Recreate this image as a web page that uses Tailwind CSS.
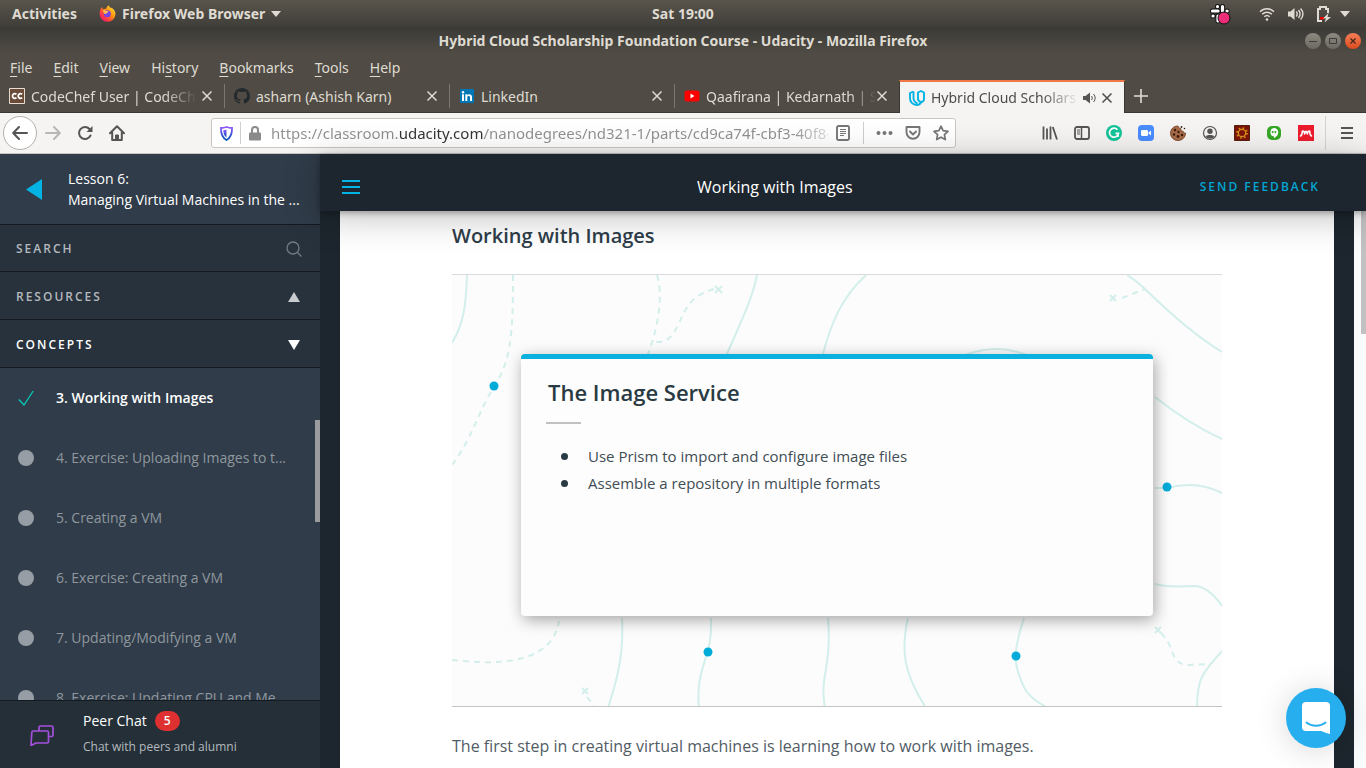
<!DOCTYPE html>
<html lang="en">
<head>
<meta charset="utf-8">
<title>Hybrid Cloud Scholarship Foundation Course - Udacity</title>
<script src="https://cdn.jsdelivr.net/npm/@tailwindcss/browser@4"></script>
</head>
<body class="flex h-screen flex-col overflow-hidden bg-[#1d262e] font-['Open_Sans','Noto_Sans',sans-serif]">

<!-- System bar -->
<div class="grid h-[27px] shrink-0 grid-cols-[1fr_auto_1fr] items-center bg-linear-to-b from-[#59554c] to-[#403e39] text-[14px] font-bold text-[#dfdbd2] font-['Noto_Sans',sans-serif]">
  <div class="flex items-center gap-[22px] pl-3">
    <button class="leading-5">Activities</button>
    <button class="flex items-center gap-[6px] leading-5">
      <svg class="size-[17px]" viewBox="0 0 16 16"><defs><linearGradient id="fx" x1="1" y1="0" x2="0" y2="1"><stop offset="0" stop-color="#fff44f"/><stop offset=".4" stop-color="#ff980e"/><stop offset=".7" stop-color="#ff3647"/><stop offset="1" stop-color="#e31587"/></linearGradient></defs><path fill="url(#fx)" d="M1 5.200C1.400 3.500 2.200 2.200 3 2c0 .8.2 1.400.7 1.900.8-.4 1.800-.6 3.100-.4C7 2 8.300.7 9.600.2c-.2 1 .3 1.700 1.200 2.500 1.100-.1 1.700.3 1.700.3 2 1.600 3 3.400 3 5.500A7.400 7.400 0 0 1 8 15.800 7.400 7.400 0 0 1 .6 8.500C.6 7 .8 6 1 5.200z"/><circle cx="7.800" cy="8.300" r="3.300" fill="#7542e5"/><path fill="#ffbd4f" d="M3.600 5.400c1.500-.8 2.700-.3 3.600.3 1.200 0 2.200.5 1.400 1.200-.6.500-1.500.500-1.700 1.500-.9.300-2-.2-2.400-1.200z"/></svg>
      Firefox Web Browser
      <svg class="h-[6px] w-[10px]" viewBox="0 0 10 6"><path fill="#dfdbd2" d="M0 0h10L5 6z"/></svg>
    </button>
  </div>
  <time>Sat 19:00</time>
  <div class="flex items-center justify-end pr-4">
    <svg class="mr-7 size-[22px]" viewBox="0 0 22 22"><g stroke="#111" stroke-width="5" stroke-linecap="round"><path d="M8.500 3.500v.1M3.500 8H9M13.500 3.500V8M18 8h.1M4 13h.1M9 13v5"/></g><g stroke="#fff" stroke-width="3.200" stroke-linecap="round"><path d="M8.500 3.500v.1M3.500 8H9M13.500 3.500V8M18 8h.1M4 13h.1M9 13v5"/></g><circle cx="15" cy="15" r="6" fill="#ec2d77" stroke="#111"/></svg>
    <svg class="mr-3 size-4" viewBox="0 0 16 16" fill="none" stroke="#dfdbd2" stroke-width="1.500"><path d="M1 5.800c4-4 10-4 14 0M3.200 8.300c2.800-2.800 6.800-2.800 9.600 0M5.300 10.800c1.600-1.500 3.800-1.500 5.400 0"/><circle cx="8" cy="13.500" r="1.300" fill="#dfdbd2" stroke="none"/></svg>
    <svg class="mr-3 h-4 w-[17px]" viewBox="0 0 17 16" fill="none" stroke="#dfdbd2" stroke-width="1.400"><path fill="#dfdbd2" stroke="none" d="M1 5.500h2.500L7.500 2v12l-4-3.500H1z"/><path d="M9.300 5.500c1.200 1.600 1.200 3.400 0 5M11.500 4c2 2.600 2 5.400 0 8M13.600 2.500c3 3.500 3 7.500 0 11"/></svg>
    <svg class="mr-2 h-[18px] w-4" viewBox="0 0 16 18"><path fill="none" stroke="#dfdbd2" stroke-width="2" d="M6 16H2V4h2V2h6v2h2v4"/><path fill="#e00" d="M4 12h4v2.500H4z"/><path fill="#dfdbd2" d="M12.500 8 7 13.500h3L8.500 17.500l6.500-5.500h-3.500z"/></svg>
    <svg class="h-[6px] w-[10px]" viewBox="0 0 10 6"><path fill="#dfdbd2" d="M0 0h10L5 6z"/></svg>
  </div>
</div>

<!-- Title bar -->
<div class="grid h-[27px] shrink-0 grid-cols-[1fr_auto_1fr] items-center bg-linear-to-b from-[#3b3a36] to-[#504c45]">
  <span></span>
  <div class="text-[14px] font-bold text-[#dfdbd2] font-['Noto_Sans',sans-serif]">Hybrid Cloud Scholarship Foundation Course - Udacity - Mozilla Firefox</div>
  <div class="flex justify-end gap-1 pr-[5px]">
    <button aria-label="Minimize" class="flex size-4 items-center justify-center rounded-full bg-linear-to-b from-[#8d8a82] to-[#6c6962]"><svg class="size-4" viewBox="0 0 16 16" stroke="#3c3b37" fill="none"><path d="M4 8.500h8"/></svg></button>
    <button aria-label="Maximize" class="flex size-4 items-center justify-center rounded-full bg-linear-to-b from-[#8d8a82] to-[#6c6962]"><svg class="size-4" viewBox="0 0 16 16" stroke="#3c3b37" fill="none"><path d="M4.500 5.500h7v5h-7z"/></svg></button>
    <button aria-label="Close" class="flex size-4 items-center justify-center rounded-full bg-linear-to-b from-[#f37e55] to-[#dd4a1b]"><svg class="size-4" viewBox="0 0 16 16" stroke="#46281c" stroke-width="1.300" fill="none"><path d="m5.500 5.500 5 5m0-5-5 5"/></svg></button>
  </div>
</div>

<!-- Menu bar -->
<nav class="flex h-[26px] shrink-0 items-center gap-[21px] bg-[#504c45] pl-[10px] text-[14px] text-[#dfdbd2] font-['Noto_Sans',sans-serif]">
  <button><u class="underline-offset-3">F</u>ile</button>
  <button><u class="underline-offset-3">E</u>dit</button>
  <button><u class="underline-offset-3">V</u>iew</button>
  <button>Hi<u class="underline-offset-3">s</u>tory</button>
  <button><u class="underline-offset-3">B</u>ookmarks</button>
  <button><u class="underline-offset-3">T</u>ools</button>
  <button><u class="underline-offset-3">H</u>elp</button>
</nav>

<!-- Tabs -->
<div class="flex h-[33px] shrink-0 items-stretch border-b border-[#3a3833] bg-[#504c45] text-[14px] text-[#dfdbd2] font-['Noto_Sans',sans-serif]">
  <div class="flex w-[224px] items-center pr-[11px] pl-[9px]">
    <svg class="mr-[6px] size-4 shrink-0" viewBox="0 0 16 16"><path fill="#6a4a39" stroke="#e8ddd0" d="M.5.500h15v15H.500z"/><g fill="none" stroke="#fff" stroke-width="1.800"><path d="M7.500 6.200C5.500 5 3.500 5.800 3.500 8s2 3 4 1.800M13.200 6.200C11.200 5 9.200 5.800 9.200 8s2 3 4 1.800"/></g></svg>
    <span class="min-w-0 flex-1 overflow-hidden whitespace-nowrap mask-r-from-80%">CodeChef User | CodeCh</span>
    <button aria-label="Close tab" class="ml-1"><svg class="size-3" viewBox="0 0 12 12" stroke="#dfdbd2" stroke-width="1.500"><path d="m1.500 1.500 9 9m0-9-9 9"/></svg></button>
  </div>
  <div class="my-1 w-px bg-[#7b7870]"></div>
  <div class="flex w-[224px] items-center pr-[11px] pl-[9px]">
    <svg class="mr-[6px] size-4 shrink-0" viewBox="0 0 16 16"><path fill="#24292e" d="M8 0C3.580 0 0 3.580 0 8c0 3.540 2.290 6.530 5.470 7.590.4.070.550-.170.550-.380 0-.190-.010-.820-.010-1.490-2.010.370-2.530-.490-2.690-.940-.090-.230-.480-.940-.820-1.130-.280-.150-.680-.520-.010-.530.630-.010 1.080.580 1.230.820.720 1.210 1.870.870 2.330.660.070-.520.280-.870.510-1.070-1.780-.200-3.640-.890-3.640-3.950 0-.870.310-1.590.820-2.150-.080-.200-.360-1.020.080-2.120 0 0 .670-.210 2.200.820.640-.180 1.320-.270 2-.270s1.360.090 2 .270c1.530-1.040 2.200-.820 2.200-.820.440 1.100.160 1.920.080 2.120.510.560.820 1.270.820 2.150 0 3.070-1.870 3.750-3.650 3.950.290.250.540.730.540 1.480 0 1.070-.010 1.930-.010 2.200 0 .210.150.460.550.380A8.010 8.010 0 0 0 16 8c0-4.420-3.580-8-8-8z"/></svg>
    <span class="min-w-0 flex-1 overflow-hidden whitespace-nowrap">asharn (Ashish Karn)</span>
    <button aria-label="Close tab" class="ml-1"><svg class="size-3" viewBox="0 0 12 12" stroke="#dfdbd2" stroke-width="1.500"><path d="m1.500 1.500 9 9m0-9-9 9"/></svg></button>
  </div>
  <div class="my-1 w-px bg-[#7b7870]"></div>
  <div class="flex w-[224px] items-center pr-[11px] pl-[9px]">
    <svg class="mr-[6px] size-4 shrink-0" viewBox="0 0 16 16"><path fill="#0077b5" d="M1 1h14v14H1z"/><path fill="#fff" d="M3 6.300h2V13H3zM6.300 6.300h1.900v.9c1-1.600 4.800-1.600 4.800 1.700V13h-2V9.500c0-2-2.700-1.900-2.700 0V13h-2z"/><circle cx="4" cy="4.200" r="1.200" fill="#fff"/></svg>
    <span class="min-w-0 flex-1 overflow-hidden whitespace-nowrap">LinkedIn</span>
    <button aria-label="Close tab" class="ml-1"><svg class="size-3" viewBox="0 0 12 12" stroke="#dfdbd2" stroke-width="1.500"><path d="m1.500 1.500 9 9m0-9-9 9"/></svg></button>
  </div>
  <div class="my-1 w-px bg-[#7b7870]"></div>
  <div class="flex w-[224px] items-center pr-[11px] pl-[9px]">
    <svg class="mr-[6px] size-4 shrink-0" viewBox="0 0 16 16"><rect y="2.500" x=".5" width="15" height="11" rx="2.500" fill="#f00"/><path fill="#fff" d="m6.500 5.500 4 2.500-4 2.500z"/></svg>
    <span class="min-w-0 flex-1 overflow-hidden whitespace-nowrap mask-r-from-85%">Qaafirana | Kedarnath | S</span>
    <button aria-label="Close tab"><svg class="size-3" viewBox="0 0 12 12" stroke="#dfdbd2" stroke-width="1.500"><path d="m1.500 1.500 9 9m0-9-9 9"/></svg></button>
  </div>
  <div class="-mb-px flex w-[226px] items-center border-x border-t-2 border-x-[#3a3833] border-t-[#f07746] bg-[#f5f4f2] pr-[11px] pl-[9px] text-[#4c4c4c]">
    <svg class="mr-[6px] size-4 shrink-0" viewBox="0 0 16 16" fill="none" stroke="#02b3e4" stroke-width="1.900" stroke-linejoin="round"><path d="M4.500 1.500 1 3v5c0 4 2.500 6.500 6.500 7 2.500 0 4-1 4.500-3"/><path d="M4.500 1.500V8c0 2.500 1.500 4.500 4 5.500M9 2.500l3-1.500 3 1.500v6.500c0 2-1.500 3.200-3.200 3C10 11.500 9 10.500 9 8.500z"/></svg>
    <span class="min-w-0 flex-1 overflow-hidden whitespace-nowrap mask-r-from-75%">Hybrid Cloud Scholars</span>
    <button aria-label="Mute tab" class="ml-1"><svg class="h-3 w-[14px]" viewBox="0 0 14 12"><path fill="#555" d="M0 4h2.500L7 .500v11L2.500 8H0z"/><path fill="none" stroke="#555" d="M8.500 4c1 1.300 1 2.700 0 4M10.500 2c2.200 2.600 2.200 5.400 0 8"/></svg></button>
    <button aria-label="Close tab" class="ml-1"><svg class="size-3" viewBox="0 0 12 12" stroke="#4c4c4c" stroke-width="1.500"><path d="m1.500 1.500 9 9m0-9-9 9"/></svg></button>
  </div>
  <button aria-label="New tab" class="ml-[9px]"><svg class="size-[14px]" viewBox="0 0 14 14" stroke="#dfdbd2" stroke-width="1.600"><path d="M7 0v14M0 7h14"/></svg></button>
</div>

<!-- Navigation toolbar -->
<div class="flex h-[41px] shrink-0 items-center border-b border-[#c8c6c3] bg-[#f5f4f2] text-[#555]">
  <button aria-label="Back" class="ml-[3px] flex size-[34px] items-center justify-center rounded-full border border-[#b3b1ae] bg-white"><svg class="size-4" viewBox="0 0 16 16" fill="none" stroke="currentColor" stroke-width="2" stroke-linecap="round" stroke-linejoin="round"><path d="M15 8H1.500M7 2 1.200 8 7 14"/></svg></button>
  <button aria-label="Forward" class="flex size-8 items-center justify-center text-[#b8b7b5]"><svg class="size-4" viewBox="0 0 16 16" fill="none" stroke="currentColor" stroke-width="2" stroke-linecap="round" stroke-linejoin="round"><path d="M1 8h13.500M9 2l5.800 6L9 14"/></svg></button>
  <button aria-label="Reload" class="flex size-8 items-center justify-center"><svg class="size-4" viewBox="0 0 16 16"><path fill="none" stroke="currentColor" stroke-width="2" stroke-linecap="round" d="M13.500 10.500A6 6 0 1 1 12.500 4"/><path fill="currentColor" d="M15.500 1v6h-6z"/></svg></button>
  <button aria-label="Home" class="flex size-8 items-center justify-center"><svg class="size-4" viewBox="0 0 16 16" fill="none" stroke="currentColor" stroke-width="2" stroke-linejoin="round" stroke-linecap="round"><path d="m1 8.200 7-7 7 7M3.200 7.500V15h9.600V7.500"/><path d="M6.500 14.500V10h3v4.500z" fill="currentColor" stroke-width="1"/></svg></button>
  <div class="mx-[78px] flex h-[30px] min-w-0 flex-1 items-center rounded-[3px] border border-[#c9c6c2] bg-white">
    <svg class="ml-2 h-[15px] w-[13px] shrink-0" viewBox="0 0 13 15"><defs><linearGradient id="sh" x1="0" y1="0" x2="0" y2="1"><stop offset="0" stop-color="#9059ff"/><stop offset="1" stop-color="#0250bb"/></linearGradient></defs><path fill="none" stroke="url(#sh)" stroke-width="1.800" d="M6.500 1C8 1.500 10.500 2 12 2c.2 5-.5 9-5.500 12C1.500 11 .8 7 1 2c1.500 0 4-.5 5.500-1z"/><path fill="url(#sh)" d="M6.500 3.500c-1 .4-2.200.6-3.200.7.1 3.300.8 5.300 3.200 7.300z"/></svg>
    <div class="mx-[7px] h-[22px] w-px bg-[#cfcdca]"></div>
    <svg class="h-[15px] w-[14px] shrink-0" viewBox="0 0 14 15"><rect x="1" y="6.500" width="12" height="8" rx="1" fill="#8a8a8a"/><path fill="none" stroke="#8a8a8a" stroke-width="2" d="M4 7.500V4a3 3 0 0 1 6 0v3.500"/></svg>
    <input aria-label="Address" value="https://classroom.udacity.com/nanodegrees/nd321-1/parts/cd9ca74f-cbf3-40f8-" class="ml-[9px] min-w-0 flex-1 bg-[linear-gradient(90deg,#8f8f8f_127px,#333_127px,#333_213px,#8f8f8f_213px,#8f8f8f_520px,#dddddd)] bg-clip-text text-[15px] text-transparent outline-none font-['Noto_Sans',sans-serif]">
    <button aria-label="Reader view" class="ml-2"><svg class="h-4 w-[14px]" viewBox="0 0 14 16" fill="none" stroke="#777"><rect x="1" y="1" width="12" height="14" rx="1.500" stroke-width="1.900"/><path d="M4 4.500h6M4 6.500h6M4 8.500h6M4 10.500h4"/></svg></button>
    <div class="ml-[13px] h-[22px] w-px bg-[#cfcdca]"></div>
    <button aria-label="Page actions" class="ml-3"><svg class="h-4 w-[17px]" viewBox="0 0 17 16" fill="#777"><circle cx="2.500" cy="8" r="2"/><circle cx="8.500" cy="8" r="2"/><circle cx="14.500" cy="8" r="2"/></svg></button>
    <button aria-label="Save to Pocket" class="ml-3"><svg class="size-4" viewBox="0 0 16 16" fill="none" stroke="#777" stroke-width="1.900" stroke-linecap="round" stroke-linejoin="round"><path d="M1.500 2h13v5c0 9-13 9-13 0z"/><path d="m5 6.500 3 3 3-3"/></svg></button>
    <button aria-label="Bookmark" class="mr-[6px] ml-3"><svg class="size-4" viewBox="0 0 16 16" fill="none" stroke="#777" stroke-width="1.700" stroke-linejoin="round"><path d="m8 1.200 2.100 4.500 4.900.6-3.600 3.400.9 4.900L8 12.200l-4.300 2.400.9-4.900L1 6.300l4.900-.6z"/></svg></button>
  </div>
  <button aria-label="Library" class="flex size-8 items-center justify-center"><svg class="size-4" viewBox="0 0 16 16" fill="none" stroke="currentColor" stroke-width="1.800"><path d="M1.500 1.500v13M5 3.500v11M8.500 1.500v13M10.800 2l4.200 12.500"/></svg></button>
  <button aria-label="Sidebars" class="flex size-8 items-center justify-center"><svg class="size-4" viewBox="0 0 16 16" fill="none" stroke="currentColor"><rect x="1" y="2" width="14" height="12" rx="2" stroke-width="1.800"/><path d="M7.500 2v12" stroke-width="1.500"/><path d="M3 5h3M3 7h3M3 9h3"/></svg></button>
  <button aria-label="Grammarly" class="flex size-8 items-center justify-center"><svg class="size-4" viewBox="0 0 16 16"><circle cx="8" cy="8" r="8" fill="#15c39a"/><path fill="none" stroke="#fff" stroke-width="1.700" d="M11.500 4.800a4.500 4.500 0 1 0 1 3.500H9.500M12 12V8.500"/></svg></button>
  <button aria-label="Zoom" class="flex size-8 items-center justify-center"><svg class="size-4" viewBox="0 0 16 16"><rect width="16" height="16" rx="4" fill="#4a8cff"/><rect x="3" y="5" width="7" height="6" rx="1.200" fill="#fff"/><path fill="#fff" d="m10.500 7.500 2.500-2v5l-2.500-2z"/></svg></button>
  <button aria-label="Cookies" class="flex size-8 items-center justify-center"><svg class="size-4" viewBox="0 0 16 16"><path fill="#a86b47" stroke="#6d3b22" stroke-width=".8" d="M8 1C4 .8.5 4 .5 8.200c0 4 3.300 7.300 7.500 7.300s7.600-3.200 7.500-7.500c-1.500.3-2.300-.6-2.300-1.800-1.800.2-2.600-.8-2.200-2.400C9.500 3.700 8.500 2.500 8 1z"/><g fill="#3b1d10"><circle cx="5" cy="5" r="1.300"/><circle cx="8.500" cy="7" r="1.200"/><circle cx="4" cy="9.500" r="1.200"/><circle cx="8" cy="11.500" r="1.400"/><circle cx="12" cy="10" r="1.200"/><circle cx="11.500" cy="2" r=".9"/><circle cx="14.500" cy="3.500" r=".8"/></g></svg></button>
  <button aria-label="Account" class="flex size-8 items-center justify-center"><svg class="size-4" viewBox="0 0 16 16"><circle cx="8" cy="8" r="6.500" fill="none" stroke="#555" stroke-width="1.200"/><circle cx="8" cy="6.300" r="2.700" fill="#555"/><path fill="#555" d="M3.500 11.500c1-2 8-2 9 0-2 3-7 3-9 0z"/></svg></button>
  <button aria-label="Extension settings" class="flex size-8 items-center justify-center"><svg class="size-4" viewBox="0 0 16 16"><path fill="#7e1408" stroke="#53200f" d="M.5.500h15v15H.500z"/><circle cx="8" cy="8" r="3.700" fill="none" stroke="#d8951c" stroke-width="1.300"/><circle cx="8" cy="8" r="5" fill="none" stroke="#d8951c" stroke-width="1.700" stroke-dasharray="1.600 2.327"/></svg></button>
  <button aria-label="Hangouts" class="flex size-8 items-center justify-center"><svg class="size-4" viewBox="0 0 16 16"><rect x="1" y="1" width="14" height="14" rx="5" fill="#35a826"/><path fill="#fff" d="M8 3a4.300 4.300 0 0 1 4.300 4.300c0 2.500-1.800 4.600-4.300 5.900v-1.700a4.300 4.300 0 0 1 0-8.500z"/><path fill="#35a826" d="M5.800 6h1.700v1.700l-.8 1v-1h-.9zM8.500 6h1.700v1.700l-.8 1v-1h-.9z"/></svg></button>
  <button aria-label="Mendeley" class="flex size-8 items-center justify-center"><svg class="size-4" viewBox="0 0 16 16"><path fill="#ec1c2d" d="M0 0h16v16H0z"/><path fill="none" stroke="#fff" stroke-width="1.600" stroke-linecap="round" stroke-linejoin="round" d="M2.500 11c1.300-.8 1.800-2 1.800-4.800M13.500 11c-1.300-.8-1.800-2-1.800-4.800M4.300 6.200c1.700-.3 2.400.8 2.300 2.800M11.700 6.200c-1.700-.3-2.400.8-2.300 2.800"/><circle cx="8" cy="7" r="1.600" fill="#fff"/></svg></button>
  <div class="ml-[3px] h-[34px] w-px bg-[#d5d3d0]"></div>
  <button aria-label="Menu" class="mr-[3px] ml-[5px] flex size-8 items-center justify-center"><svg class="size-4" viewBox="0 0 16 16" stroke="currentColor" stroke-width="2"><path d="M2 3h12M2 8h12M2 13h12"/></svg></button>
</div>

<!-- Classroom -->
<div class="flex min-h-0 flex-1">
  <aside class="flex w-80 shrink-0 flex-col bg-[#303c49] text-[14px] text-white">
    <div class="flex h-[71px] shrink-0 items-center border-b border-[#141a20] pl-[26px]">
      <button aria-label="Back to lessons"><svg class="h-[21px] w-4" viewBox="0 0 16 21"><path fill="#02b3e4" d="M16 0v21L0 10.500z"/></svg></button>
      <p class="ml-[26px] leading-[21px]">Lesson 6:<br>Managing Virtual Machines in the ...</p>
    </div>
    <label class="flex h-[47px] shrink-0 items-center border-b border-[#141a20] bg-[#27323d] px-4 pt-px">
      <input type="search" aria-label="Search" placeholder="SEARCH" class="min-w-0 flex-1 bg-transparent text-[12px] font-semibold tracking-[2px] outline-none placeholder:text-[#b4b9bd] placeholder:opacity-100">
      <svg class="mr-[2px] size-4" viewBox="0 0 16 16" fill="none" stroke="#6f7c88" stroke-width="1.300"><circle cx="7" cy="7" r="6"/><path d="m11.500 11.500 4 4"/></svg>
    </label>
    <button class="flex h-12 shrink-0 items-center justify-between border-b border-[#141a20] bg-[#27323d] pt-[2px] pr-5 pl-4 text-[12px] font-semibold tracking-[2px] text-[#b4b9bd]">RESOURCES<svg class="h-[10px] w-3" viewBox="0 0 12 10"><path fill="#c9ccce" d="M6 0l6 10H0z"/></svg></button>
    <button class="flex h-12 shrink-0 items-center justify-between border-b border-[#141a20] bg-[#27323d] pt-[2px] pr-5 pl-4 text-[12px] font-semibold tracking-[2px]">CONCEPTS<svg class="h-[10px] w-3" viewBox="0 0 12 10"><path fill="#fff" d="M6 10l6-10H0z"/></svg></button>
    <div class="relative min-h-0 flex-1 overflow-hidden">
      <ul class="text-[#8f979e]">
        <li><a href="#" class="flex h-[60px] items-center pr-8 pl-[18px] font-semibold text-white"><svg class="mr-[22px] size-4 shrink-0" viewBox="0 0 16 16" fill="none" stroke="#02ccba" stroke-width="1.300"><path d="M.8 9.500 6 15 15.200 1"/></svg><span class="truncate pb-[2px]">3. Working with Images</span></a></li>
        <li><a href="#" class="flex h-[60px] items-center pr-8 pl-[18px]"><span class="mr-[22px] size-4 shrink-0 rounded-full bg-[#979da4]"></span><span class="truncate pb-[2px]">4. Exercise: Uploading Images to t...</span></a></li>
        <li><a href="#" class="flex h-[60px] items-center pr-8 pl-[18px]"><span class="mr-[22px] size-4 shrink-0 rounded-full bg-[#979da4]"></span><span class="truncate pb-[2px]">5. Creating a VM</span></a></li>
        <li><a href="#" class="flex h-[60px] items-center pr-8 pl-[18px]"><span class="mr-[22px] size-4 shrink-0 rounded-full bg-[#979da4]"></span><span class="truncate pb-[2px]">6. Exercise: Creating a VM</span></a></li>
        <li><a href="#" class="flex h-[60px] items-center pr-8 pl-[18px]"><span class="mr-[22px] size-4 shrink-0 rounded-full bg-[#979da4]"></span><span class="truncate pb-[2px]">7. Updating/Modifying a VM</span></a></li>
        <li><a href="#" class="flex h-[60px] items-center pr-8 pl-[18px]"><span class="mr-[22px] size-4 shrink-0 rounded-full bg-[#979da4]"></span><span class="truncate pb-[2px]">8. Exercise: Updating CPU and Me...</span></a></li>
      </ul>
      <div class="absolute top-[52px] right-0 h-[102px] w-[5px] bg-[#999b9d]"></div>
    </div>
    <a href="#" class="flex h-[68px] shrink-0 items-center border-t border-[#141a20] bg-[#242f38] pt-px pl-[30px]">
      <svg class="h-[21px] w-6" viewBox="0 0 24 21" fill="none" stroke="#a550dd" stroke-width="1.700" stroke-linejoin="round"><path d="M3 6h14q1.500 0 1.500 1.500v9q0 1.500-1.500 1.500H6l-5 2.500L1.800 7.500Q2 6 3 6z"/><path d="M9 6V2.500Q9 1 10.500 1h11Q23 1 23 2.500V10q0 1.500-1.500 1.500h-3"/></svg>
      <div class="ml-[29px]">
        <div class="flex items-center gap-2 leading-5">Peer Chat <span class="rounded-full bg-[#de3030] px-[9px] text-[12px] leading-5 font-semibold">5</span></div>
        <div class="mt-1 text-[12px] leading-6 text-[#b5babe]">Chat with peers and alumni</div>
      </div>
    </a>
  </aside>

  <div class="flex min-w-0 flex-1 flex-col">
    <header class="relative z-10 flex h-[57px] shrink-0 items-center justify-between bg-[#1d262e] pt-2 pr-[46px] pl-[22px] shadow-[0_2px_6px_rgba(0,0,0,0.3),0_6px_36px_rgba(0,0,0,0.25)]">
      <button aria-label="Toggle sidebar"><svg class="h-4 w-[18px]" viewBox="0 0 18 16" stroke="#02b3e4" stroke-width="2"><path d="M0 2h18M0 8h18M0 14h18"/></svg></button>
      <h1 class="pr-[10px] text-[16px] leading-6 text-white">Working with Images</h1>
      <button class="text-[12px] font-semibold tracking-[2px] text-[#02a5d3]">SEND FEEDBACK</button>
    </header>
    <div class="flex min-h-0 flex-1">
      <main class="mx-5 min-w-0 flex-1 overflow-hidden bg-white">
        <article class="mx-auto max-w-[770px] pt-2">
          <h2 class="text-[20px] leading-[34px] font-semibold text-[#2e3d49]">Working with Images</h2>
          <div class="relative mt-[21px] h-[433px] border-t border-b border-t-[#dadada] border-b-[#c4c4c4] bg-[#fcfcfc] px-[69px] pt-[79px]">
            <svg class="absolute inset-0 size-full" viewBox="0 0 770 431" preserveAspectRatio="none" fill="none" stroke="#d3efeb" stroke-width="2">
              <path d="M15 0C14 30 12 48 0 68M305 0C300 26 285 55 275 79M371 79C379 48 390 22 414 0M513 80Q545 68 575 80M675 0Q685 6 693 14Q737 57 770 77M703 122Q737 149 770 164M170 343C172 380 165 405 156 433M259 343C261 385 243 390 247 433M376 343C380 395 367 400 373 433M456 343C448 378 453 400 474 433M572 343C560 380 562 390 571 410Q576 423 596 433M703 213H715Q745 205 770 218M703 309C716 313 730 311 743 311Q757 312 770 331M770 376C753 396 745 400 745 433"/>
              <path stroke-dasharray="6 5" d="M61 0C61 60 59 85 42 112S22 160 0 190M205 0C211 20 207 50 196 79M262 14C232 22 232 43 221 59Q215 68 201 67M670 23 693 14M0 385C45 390 100 390 107 346M135 422 143 432M709 358C724 372 717 388 735 390L758 389"/>
              <path d="m263 11 7 7m0-7-7 7M658 20l6 6m0-6-6 6M130 413l6 6m0-6-6 6M703 352l6 6m0-6-6 6"/>
              <g fill="#02acd9" stroke="none"><circle cx="42" cy="111" r="4.500"/><circle cx="256" cy="377" r="4.500"/><circle cx="564" cy="381" r="4.500"/><circle cx="715" cy="212" r="4.500"/></g>
            </svg>
            <div class="relative h-[262px] rounded-[4px] border-t-5 border-[#0ab0de] bg-[#fdfdfd] pt-[18px] pl-[27px] text-[#2a3a42] shadow-[2px_4px_16px_rgba(0,0,0,0.35)]">
              <h3 class="text-[22px] leading-[30px] font-semibold">The Image Service</h3>
              <div class="mt-[15px] -ml-[2px] h-[2px] w-[35px] bg-[#bfc1c2]"></div>
              <ul class="mt-[19px] ml-[13px] text-[15px] leading-[27px] text-[#414d54]">
                <li class="flex items-center"><span class="mr-5 size-[7px] rounded-full bg-[#2a3a42]"></span>Use Prism to import and configure image files</li>
                <li class="flex items-center"><span class="mr-5 size-[7px] rounded-full bg-[#2a3a42]"></span>Assemble a repository in multiple formats</li>
              </ul>
            </div>
          </div>
          <p class="mt-[26px] text-[16px] leading-[26px] text-[#525c65]">The first step in creating virtual machines is learning how to work with images.</p>
        </article>
      </main>
      <div class="flex w-3 justify-end bg-[#fafbfc]"><div class="h-[123px] w-[5px] bg-[#c1c1c1]"></div></div>
    </div>
  </div>
</div>

<button aria-label="Open chat" class="fixed right-5 bottom-5 z-20 flex size-[60px] items-center justify-center rounded-full bg-[#27aeef] shadow-[0_2px_32px_rgba(0,0,0,0.16)]"><svg class="h-8 w-7" viewBox="0 0 28 32"><path fill="#fff" d="M4 0h20a4 4 0 0 1 4 4v28s-5-1-8.500-3H4a4 4 0 0 1-4-4V4a4 4 0 0 1 4-4z"/><path fill="none" stroke="#27aeef" stroke-width="1.800" stroke-linecap="round" d="M4.500 20.500c5 4.300 14 4.300 19 0"/></svg></button>
</body>
</html>
